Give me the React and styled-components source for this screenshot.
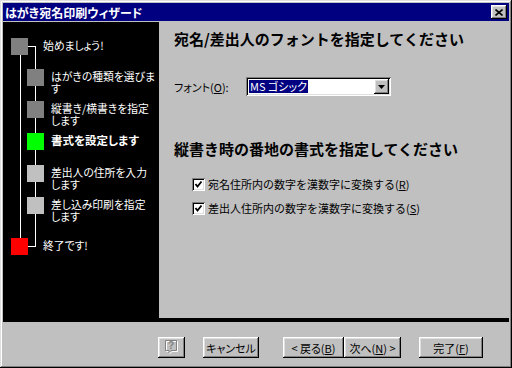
import React from "react";
import styled, { createGlobalStyle } from "styled-components";

const steps = [
    { kind: "start", color: "#808080", lines: ["始めましょう!"] },
    { kind: "step", color: "#808080", lines: ["はがきの種類を選びま", "す"] },
    { kind: "step", color: "#808080", lines: ["縦書き/横書きを指定", "します"] },
    { kind: "step", color: "#00ff00", lines: ["書式を設定します"], current: true },
    { kind: "step", color: "#c0c0c0", lines: ["差出人の住所を入力", "します"] },
    { kind: "step", color: "#c0c0c0", lines: ["差し込み印刷を指定", "します"] },
    { kind: "end", color: "#ff0000", lines: ["終了です!"] },
];

const Check = () => (
    <CheckBox>
        <svg width="9" height="9" viewBox="0 0 9 9">
            <path d="M1.5 4 L3.5 6.5 L7.5 1.5" stroke="#000" strokeWidth="1.8" fill="none" />
        </svg>
    </CheckBox>
);

const Wizard = () => {
    return (
        <Window>
            <GlobalStyle />
            <TitleBar>
                <span>はがき宛名印刷ウィザード</span>
                <CloseButton>
                    <svg width="8" height="7" viewBox="0 0 8 7">
                        <path d="M0.5 0.5 L7.5 6.5 M7.5 0.5 L0.5 6.5" stroke="#000" strokeWidth="1.6" />
                    </svg>
                </CloseButton>
            </TitleBar>

            <Main>
                <Steps>
                    {steps.map((s, i) => (
                        <StepRow key={i} $kind={s.kind}>
                            <Square $kind={s.kind} $color={s.color} />
                            <StepText $kind={s.kind} $current={s.current}>
                                {s.lines[0]}
                                {s.lines[1] && (
                                    <>
                                        <br />
                                        {s.lines[1]}
                                    </>
                                )}
                            </StepText>
                        </StepRow>
                    ))}
                </Steps>

                <Content>
                    <Heading>宛名/差出人のフォントを指定してください</Heading>
                    <FontRow>
                        <Label>
                            フォント(<u>O</u>):
                        </Label>
                        <Combo>
                            <Selected>MS ゴシック</Selected>
                            <ComboButton>
                                <svg width="7" height="4" viewBox="0 0 7 4">
                                    <path d="M0 0 H7 L3.5 4 Z" fill="#000" />
                                </svg>
                            </ComboButton>
                        </Combo>
                    </FontRow>

                    <Heading $top={44}>縦書き時の番地の書式を指定してください</Heading>
                    <Options>
                        <CheckRow>
                            <Check />
                            <span>
                                宛名住所内の数字を漢数字に変換する(<u>R</u>)
                            </span>
                        </CheckRow>
                        <CheckRow>
                            <Check />
                            <span>
                                差出人住所内の数字を漢数字に変換する(<u>S</u>)
                            </span>
                        </CheckRow>
                    </Options>
                </Content>
            </Main>

            <Footer>
                <Button $w={27} disabled>
                    <svg width="15" height="15" viewBox="0 0 15 15">
                        <path d="M2.5 1.5 H13.5 V11.5 H8 L6 13.5 V11.5 H2.5 Z" fill="none" stroke="#fff" />
                        <path d="M1.5 0.5 H12.5 V10.5 H7 L5 12.5 V10.5 H1.5 Z" fill="none" stroke="#808080" />
                        <text x="7" y="9" fontSize="10" fontWeight="bold" textAnchor="middle" fill="#808080" fontFamily="Liberation Sans, sans-serif">?</text>
                    </svg>
                </Button>
                <Button $w={56}>キャンセル</Button>
                <NavGroup>
                    <Button $w={61}>
                        &lt; 戻る(<u>B</u>)
                    </Button>
                    <Button $w={57}>
                        次へ(<u>N</u>) &gt;
                    </Button>
                </NavGroup>
                <Button $w={64}>
                    完了(<u>F</u>)
                </Button>
            </Footer>
        </Window>
    );
};

export default Wizard;

//style------------------------------------------------------------------

const GlobalStyle = createGlobalStyle`
    html,
    body {
        margin: 0;
        padding: 0;
        background: #c0c0c0;
    }
    body {
        font-family: "Noto Sans CJK JP", "Noto Sans", sans-serif;
    }
`;

const raised = `
    box-shadow: inset -1px -1px #000, inset 1px 1px #fff, inset -2px -2px #808080,
        inset 2px 2px #dfdfdf;
`;

const sunken = `
    box-shadow: inset 1px 1px #808080, inset -1px -1px #fff, inset 2px 2px #000,
        inset -2px -2px #dfdfdf;
`;

const line = "linear-gradient(#fff, #fff)";

// tree connectors drawn as thin gradients behind each row
const rails = {
    start: `${line} 9px 100% / 1px 50% no-repeat, ${line} 24px 16px / 1px 16px no-repeat,
        ${line} 17px 16px / 8px 1px no-repeat`,
    step: `${line} 9px 0 / 1px 100% no-repeat, ${line} 24px 0 / 1px 100% no-repeat`,
    end: `${line} 9px 0 / 1px 16px no-repeat, ${line} 24px 0 / 1px 25px no-repeat,
        ${line} 17px 24px / 8px 1px no-repeat`,
};

const Window = styled.div`
    width: 512px;
    height: 368px;
    box-sizing: border-box;
    padding: 3px;
    display: flex;
    flex-direction: column;
    background: #c0c0c0;
    box-shadow: inset -1px -1px #000, inset 1px 1px #dfdfdf, inset -2px -2px #808080,
        inset 2px 2px #fff;
    overflow: hidden;
`;

const TitleBar = styled.div`
    height: 18px;
    margin-bottom: 1px;
    padding: 0 2px;
    display: flex;
    align-items: center;
    justify-content: space-between;
    background: #000080;
    color: #fff;
    font-size: 12px;
    font-weight: bold;
    font-feature-settings: "palt";
`;

const CloseButton = styled.div`
    width: 16px;
    height: 14px;
    display: flex;
    align-items: center;
    justify-content: center;
    background: #c0c0c0;
    ${raised}
`;

const Main = styled.div`
    height: 296px;
    display: flex;
    border-bottom: 4px solid #000;
`;

const Steps = styled.div`
    width: 156px;
    box-sizing: border-box;
    padding: 8px 0 0 8px;
    background: #000;
    color: #fff;
    font-size: 11px;
    line-height: 12px;
    font-feature-settings: "palt";
`;

const StepRow = styled.div`
    height: ${(p) => (p.$kind === "end" ? 48 : 32)}px;
    display: flex;
    align-items: flex-start;
    background: ${(p) => rails[p.$kind]};
`;

const Square = styled.div`
    flex: none;
    width: 17px;
    height: 17px;
    background: ${(p) => p.$color};
    margin-left: ${(p) => (p.$kind === "step" ? 16 : 0)}px;
    margin-top: ${(p) => (p.$kind === "step" ? 7 : p.$kind === "end" ? 16 : 8)}px;
`;

const StepText = styled.div`
    white-space: nowrap;
    margin-left: ${(p) => (p.$kind === "step" ? 7 : 15)}px;
    margin-top: ${(p) => (p.$kind === "step" ? 8 : p.$kind === "end" ? 17 : 9)}px;
    font-weight: ${(p) => (p.$current ? "bold" : "normal")};
    font-size: ${(p) => (p.$current ? 11.5 : 10.8)}px;
`;

const Content = styled.div`
    flex: 1;
    padding: 8px 0 0 15px;
    background: #c0c0c0;
    color: #000;
`;

const Heading = styled.h2`
    margin: ${(p) => p.$top || 0}px 0 0;
    font-size: 15px;
    line-height: 18px;
    font-weight: bold;
    white-space: nowrap;
`;

const FontRow = styled.div`
    margin-top: 29px;
    height: 19px;
    display: flex;
    align-items: center;
`;

const Label = styled.div`
    width: 72px;
    font-size: 11px;
    font-feature-settings: "palt";
`;

const Combo = styled.div`
    width: 145px;
    height: 19px;
    box-sizing: border-box;
    padding: 2px;
    display: flex;
    align-items: center;
    background: #fff;
    ${sunken}
`;

const Selected = styled.span`
    margin-left: 1px;
    padding: 0 1px;
    background: #000080;
    color: #fff;
    font-size: 11px;
    line-height: 13px;
    font-feature-settings: "palt";
`;

const ComboButton = styled.div`
    margin-left: auto;
    width: 15px;
    height: 15px;
    display: flex;
    align-items: center;
    justify-content: center;
    background: #c0c0c0;
    ${raised}
`;

const Options = styled.div`
    margin-top: 16px;
    padding-left: 18px;
    display: flex;
    flex-direction: column;
    gap: 4px;
`;

const CheckRow = styled.div`
    height: 20px;
    display: flex;
    align-items: center;
    gap: 3px;
    font-size: 11px;
    white-space: nowrap;
`;

const CheckBox = styled.div`
    width: 13px;
    height: 13px;
    display: flex;
    align-items: center;
    justify-content: center;
    background: #fff;
    ${sunken}
`;

const Footer = styled.div`
    flex: 1;
    display: flex;
    justify-content: flex-end;
    align-items: flex-start;
    gap: 18px;
    padding: 15px 26px 0 0;
`;

const NavGroup = styled.div`
    display: flex;
    margin-left: 6px;
`;

const Button = styled.button`
    width: ${(p) => p.$w}px;
    height: 21px;
    padding: 0;
    border: none;
    display: flex;
    align-items: center;
    justify-content: center;
    background: #c0c0c0;
    color: #000;
    font-family: "Noto Sans CJK JP", sans-serif;
    font-size: 11px;
    font-feature-settings: "palt";
    white-space: nowrap;
    ${raised}
`;
